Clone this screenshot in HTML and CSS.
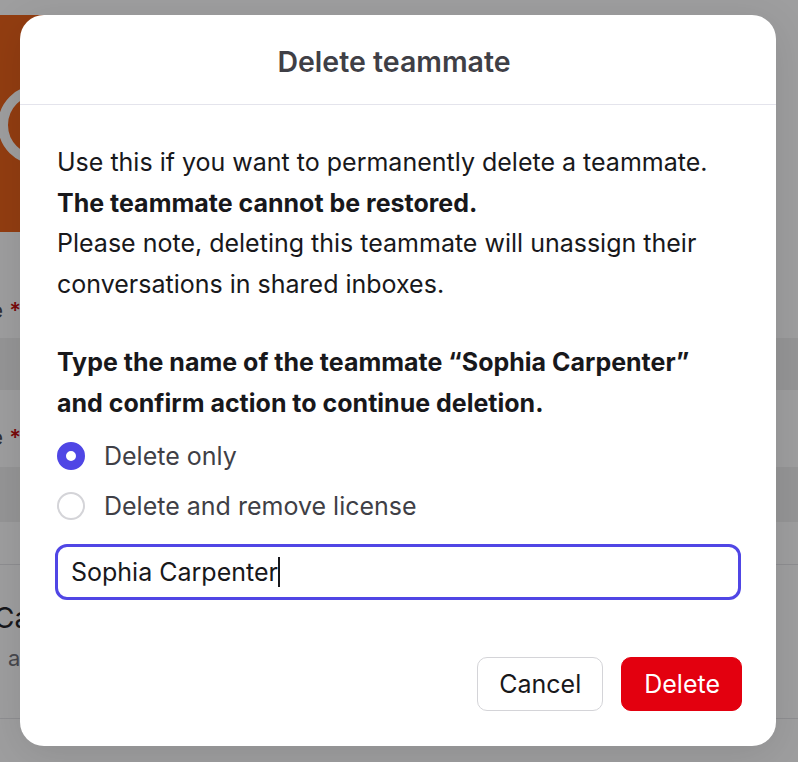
FILE: index.html
```html
<!DOCTYPE html>
<html>
<head>
<meta charset="utf-8">
<link rel="stylesheet" href="styles.css">
</head>
<body>
<div class="page">
  <div class="topbar"></div>
  <div class="banner"><div class="avatar"></div></div>
  <div class="form">
    <div class="label lbl1">Name <span class="req">*</span></div>
    <div class="field f1"></div>
    <div class="label lbl2">Title <span class="req">*</span></div>
    <div class="field f2"></div>
    <div class="sep"></div>
    <div class="sect">
      <div class="sect-title">Calendar</div>
      <div class="sect-sub">availability</div>
    </div>
    <div class="sep last"></div>
  </div>
</div>
<div class="overlay"></div>
<div class="modal">
  <div class="modal-head">Delete teammate</div>
  <div class="modal-body">
    <p class="intro">Use this if you want to permanently delete a teammate.<br><strong>The teammate cannot be restored.</strong><br>Please note, deleting this teammate will unassign their conversations in shared inboxes.</p>
    <p class="prompt">Type the name of the teammate “Sophia Carpenter” and confirm action to continue deletion.</p>
    <div class="options">
      <label class="opt"><span class="radio on"></span>Delete only</label>
      <label class="opt"><span class="radio"></span>Delete and remove license</label>
    </div>
    <div class="input"><span>Sophia Carpenter</span><span class="caret"></span></div>
    <div class="actions">
      <button class="btn cancel">Cancel</button>
      <button class="btn danger">Delete</button>
    </div>
  </div>
</div>
</body>
</html>
```
FILE: styles.css
```css
* { box-sizing: border-box; }
html, body { margin: 0; padding: 0; }
body {
  width: 798px;
  height: 762px;
  overflow: hidden;
  background: #ffffff;
  font-family: Inter, "Noto Sans", sans-serif;
  position: relative;
}
.page { width: 798px; height: 762px; }
.topbar { height: 15px; background: #ffffff; }
.banner {
  height: 217px;
  width: 140px;
  background: #ea580c;
  position: relative;
  overflow: hidden;
}
.avatar {
  position: absolute;
  left: -2px;
  top: 70px;
  width: 80px;
  height: 80px;
  border-radius: 50%;
  border: 10px solid #ffffff;
}
.label {
  font-size: 22px;
  color: #3f3f46;
  width: 21px;
  height: 36px;
  display: flex;
  align-items: center;
  justify-content: flex-end;
  white-space: nowrap;
}
.lbl1 { margin-top: 60px; }
.lbl2 { margin-top: 29px; }
.req { color: #c00000; margin-left: 6px; font-weight: 600; }
.field {
  width: 100%;
  background: #efefef;
}
.f1 { margin-top: 10px; height: 52px; }
.f2 { margin-top: 12px; height: 55px; }
.sep { height: 1px; background: #e4e4e7; margin-top: 42px; }
.sect { padding: 36px 0 0 0; height: 153px; margin-left: -6px; }
.sect-title { font-size: 28px; color: #18181b; line-height: 34px; }
.sect-sub { font-size: 22px; color: #6b6b72; margin-top: 10px; margin-left: 14px; }
.sep.last { margin-top: 0; }
.overlay {
  position: absolute;
  inset: 0;
  background: rgba(24, 24, 27, 0.42);
}
.modal {
  position: absolute;
  left: 20px;
  top: 15px;
  width: 756px;
  height: 731px;
  background: #ffffff;
  border-radius: 24px;
  box-shadow: 0 8px 40px rgba(0, 0, 0, 0.10);
  display: flex;
  flex-direction: column;
}
.modal-head {
  height: 90px;
  border-bottom: 1px solid #e4e4ec;
  display: flex;
  align-items: center;
  justify-content: center;
  font-size: 28.5px;
  font-weight: 600;
  color: #3f3f46;
  padding-top: 4px;
  padding-right: 8px;
}
.modal-body {
  padding: 37px 35px 35px 37px;
  display: flex;
  flex-direction: column;
  flex: 1;
}
p { margin: 0; }
.intro {
  font-size: 25px;
  line-height: 40.5px;
  color: #18181b;
}
.intro strong { font-weight: 700; }
.prompt {
  margin-top: 38px;
  font-size: 25px;
  line-height: 40.5px;
  font-weight: 700;
  color: #18181b;
}
.options {
  display: flex;
  flex-direction: column;
  gap: 14px;
  margin-top: 15px;
}
.opt {
  display: flex;
  align-items: center;
  gap: 19px;
  font-size: 25px;
  color: #3f3f46;
  height: 36px;
}
.radio {
  width: 28px;
  height: 28px;
  border-radius: 50%;
  border: 2px solid #d4d4d8;
  background: #ffffff;
  flex: none;
}
.radio.on {
  border: 9px solid #4f46e5;
  background: #ffffff;
}
.input {
  margin-top: 20px;
  height: 56px;
  margin-left: -2px;
  border: 3px solid #5046e5;
  border-radius: 12px;
  display: flex;
  align-items: center;
  padding-left: 13px;
  font-size: 25px;
  color: #18181b;
}
.caret {
  width: 2px;
  height: 30px;
  background: #18181b;
}
.actions {
  margin-top: auto;
  margin-right: -1px;
  display: flex;
  justify-content: flex-end;
  gap: 18px;
}
.btn {
  height: 54px;
  border-radius: 10px;
  font-family: Inter, "Noto Sans", sans-serif;
  font-size: 25px;
  cursor: pointer;
}
.cancel {
  padding: 0 21px;
  background: #ffffff;
  border: 1px solid #d4d4d8;
  color: #18181b;
}
.danger {
  padding: 0 21px 0 22px;
  background: #e3000f;
  border: 1px solid #e3000f;
  color: #ffffff;
}
```
